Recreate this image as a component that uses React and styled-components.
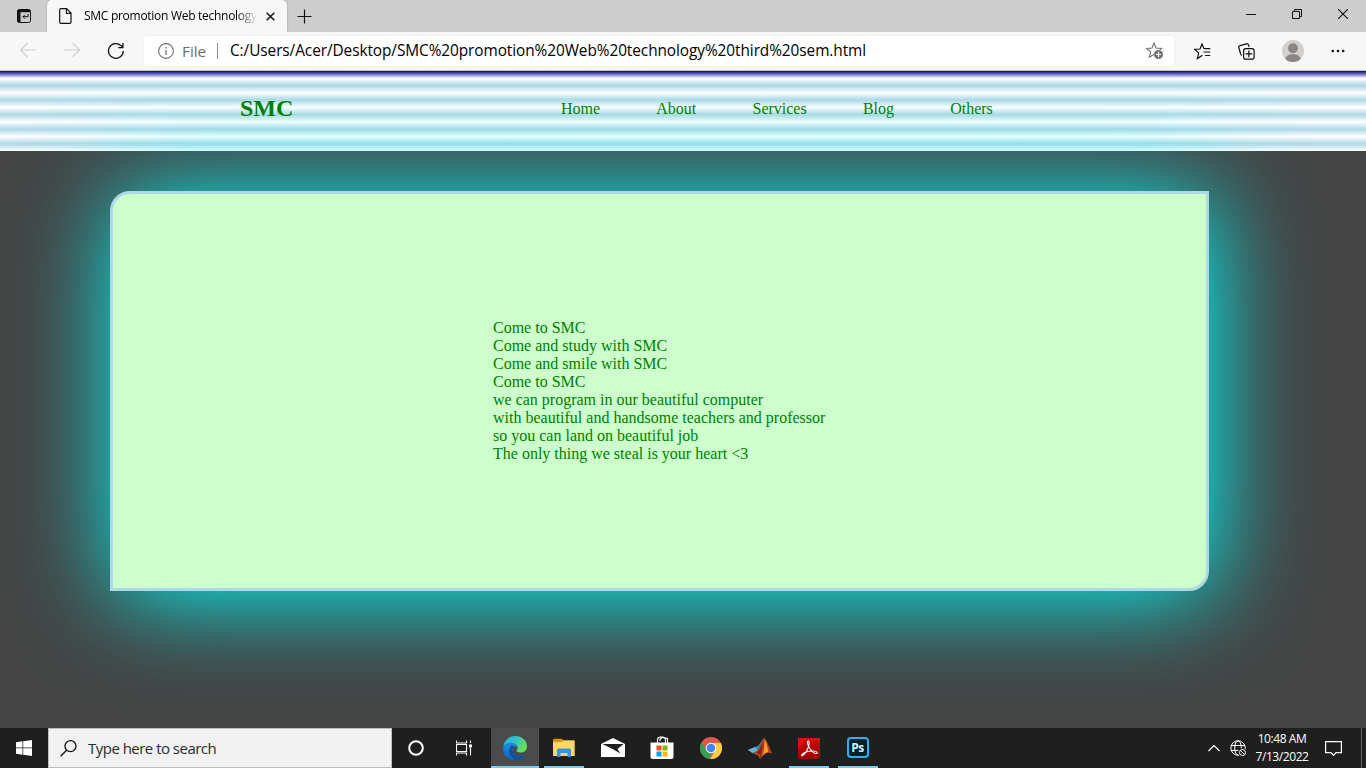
import React from "react";
import styled, { createGlobalStyle, css } from "styled-components";

const GlobalStyle = createGlobalStyle`
  *, *::before, *::after { box-sizing: border-box; }
  html, body { margin: 0; padding: 0; overflow: hidden; }
  svg { display: block; flex: none; }
`;

const ui = `"Open Sans", "Noto Sans", sans-serif`;

const Screen = styled.div`
  width: 1366px;
  height: 768px;
  display: flex;
  flex-direction: column;
  overflow: hidden;
  background: #444;
`;

const TabStrip = styled.div`
  flex: none;
  height: 32px;
  display: flex;
  background: #cdcdcd;
`;

const StripButton = styled.div`
  width: ${(p) => p.$w}px;
  height: 32px;
  display: flex;
  align-items: center;
  justify-content: center;
`;

const Tab = styled.div`
  width: 240px;
  height: 32px;
  padding: 0 10px 0 12px;
  display: flex;
  align-items: center;
  background: #f7f7f7;
  border-radius: 5px 5px 0 0;
  box-shadow: 0 0 2px rgba(0, 0, 0, 0.3);
`;

const TabTitle = styled.div`
  width: 173px;
  margin: 0 9px 0 12px;
  overflow: hidden;
  white-space: nowrap;
  font: 12px/18px ${ui};
  letter-spacing: -0.28px;
  color: #000;
  mask-image: linear-gradient(90deg, #000 152px, transparent 174px);
`;

const WindowControls = styled.div`
  margin-left: auto;
  display: flex;
  padding-bottom: 3px;
  margin-top: -2px;
`;

const Toolbar = styled.div`
  flex: none;
  position: relative;
  z-index: 1;
  height: 39px;
  display: flex;
  align-items: center;
  background: #f7f7f7;
  border-bottom: 1px solid #c6c6c6;
`;

const NavButtons = styled.div`
  width: 144px;
  padding-left: 19px;
  display: flex;
  gap: 26px;
`;

const AddressBar = styled.div`
  width: 1030px;
  height: 30px;
  padding: 0 10px 0 13px;
  display: flex;
  align-items: center;
  background: #fff;
  border-radius: 4px;
  box-shadow: 0 0 3px rgba(0, 0, 0, 0.06);
`;

const Scheme = styled.span`
  width: 28px;
  margin-left: 7px;
  font: 15.300px/24px ${ui};
  color: #6d6d6d;
`;

const Divider = styled.span`
  width: 1px;
  height: 16px;
  margin: 0 12px 0 7px;
  background: #8c8c8c;
`;

const Url = styled.span`
  flex: 1;
  white-space: nowrap;
  font: 15.400px/24px ${ui};
  letter-spacing: -0.075px;
  color: #000;
`;

const ToolbarActions = styled.div`
  flex: 1;
  padding: 0 21px 0 20px;
  display: flex;
  align-items: center;
  justify-content: space-between;
`;

const Page = styled.main`
  flex: 1;
  min-height: 0;
  overflow: hidden;
  background: #444;
  font-family: "Liberation Serif", serif;
  color: green;
`;

const Header = styled.header`
  height: 80px;
  display: flex;
  align-items: center;
  padding: 0 0 5px 240px;
  background: linear-gradient(
    darkblue, white, lightblue, white, lightblue, white,
    lightblue, white, lightblue, white, lightblue, white
  );
`;

const Brand = styled.h1`
  width: 321px;
  margin: 0;
  padding-bottom: 2px;
  font-size: 24px;
  line-height: 28px;
`;

const Menu = styled.nav`
  display: flex;
  gap: 56.200px;
  font-size: 16px;
  line-height: 18px;
`;

const MenuLink = styled.a`
  color: green;
`;

const Card = styled.section`
  width: 1099px;
  height: 400px;
  margin: 40px 0 0 110px;
  display: flex;
  align-items: center;
  justify-content: center;
  border: 3px solid lightblue;
  border-radius: 20px 0;
  background: #ccffcc;
  box-shadow: 5px 5px 100px aqua;
`;

const Verse = styled.p`
  width: 333px;
  margin: 0;
  font-size: 16px;
  line-height: 18px;
  white-space: pre;
`;

const Taskbar = styled.footer`
  flex: none;
  position: relative;
  z-index: 1;
  height: 40px;
  display: flex;
  background: #1f1f1f;
`;

const SearchBox = styled.div`
  width: 344px;
  height: 40px;
  padding-left: 11px;
  display: flex;
  align-items: center;
  gap: 11px;
  background: #f1f1f1;
  border: 1px solid #bdbdbd;
  font: 15px/20px ${ui};
  letter-spacing: -0.52px;
  color: #2c2c2c;
`;

const TaskButton = styled.div`
  width: ${(p) => p.$w || 49}px;
  height: 40px;
  display: flex;
  align-items: center;
  justify-content: center;
  ${(p) => p.$active && css`background: #4b4b4b;`}
  ${(p) => p.$open && css`box-shadow: inset 0 -2px #76cdee;`}
`;

const TaskApps = styled.div`
  display: flex;
  margin-left: 2px;
`;

const AppSlot = styled.div`
  width: 49px;
  display: flex;
  justify-content: center;
`;

const Tray = styled.div`
  margin-left: auto;
  display: flex;
  align-items: center;
`;

const Globe = styled.div`
  margin-left: 10px;
`;

const Clock = styled.div`
  width: 66px;
  margin-left: 2px;
  text-align: center;
  white-space: nowrap;
  font: 12px/18px ${ui};
  letter-spacing: -0.42px;
  color: #fff;
`;

const ActionCenter = styled.div`
  width: 46px;
  padding-left: 10px;
`;

const ShowDesktop = styled.div`
  width: 5px;
  height: 40px;
  border-left: 1px solid #666;
`;

const Line = ({ w = 16, h = 16, c = "#111", s = 1.1, children, box }) => (
  <svg width={w} height={h} viewBox={box || `0 0 ${w} ${h}`} fill="none" stroke={c} strokeWidth={s}>
    {children}
  </svg>
);

const TabActionsIcon = () => (
  <Line w={14} h={14} s={1}>
    <rect x=".5" y=".5" width="13" height="13" rx="1.8" />
    <path d="M1 2h12" strokeWidth="2.400" />
    <path d="M2 1v12" strokeWidth="3" />
    <path d="M11 5v2.700H6M8 5.700 6 7.700 8 9.700" />
  </Line>
);

const PageIcon = () => (
  <Line w={13} h={16} s={1.2}>
    <path d="M2 .7h5.600l4.400 4.400V14q0 1.300-1.300 1.300H2Q.7 15.300.7 14V2Q.7.7 2 .7ZM7.400.8V5.300H12" />
  </Line>
);

const ArrowIcon = ({ flip }) => (
  <Line w={18} h={16} c="#cfcfcf">
    <g transform={flip ? "matrix(-1 0 0 1 18 0)" : undefined}>
      <path d="M17 8H1.500M8.500 1 1.500 8l7 7" />
    </g>
  </Line>
);

const ReloadIcon = () => (
  <Line w={18} h={18} s={1.3}>
    <path d="M16.300 9A7.400 7.400 0 1 1 13.800 3.400L15.800 5.300M15.900 1v4.600h-4.600" />
  </Line>
);

const InfoIcon = () => (
  <Line w={18} h={18} c="#6f6f6f">
    <circle cx="9" cy="9" r="7.400" />
    <path d="M9 8v5M9 5v1.500" strokeWidth="1.300" />
  </Line>
);

const AddFavoriteIcon = () => (
  <Line w={18} h={18} c="#6f6f6f">
    <path d="M7.800 12.500 3.400 15.200l1.300-5.300L.5 6.400 6 6 8 1l2 5 5.500.4-1.500 1.300" />
    <circle cx="12.500" cy="12.500" r="4.500" fill="#6f6f6f" stroke="none" />
    <path d="M12.500 9.800v5.400M9.800 12.500h5.400" stroke="#fff" strokeWidth="1.200" />
  </Line>
);

const FavoritesIcon = () => (
  <Line w={17} h={17} s={1.2}>
    <path d="M8.500 12.300 3.400 15.600l1.300-5.700L.5 6.400 6 6 8 1l2 4.700h6.300M9.500 9h6.800M11 12.500h5.300" />
  </Line>
);

const CollectionsIcon = () => (
  <Line w={17} h={17} s={1.2}>
    <path d="M4 12.500Q2.800 12 2.500 10.500L.8 4.500Q.5 3 2 2.600L8.500.8q1.600-.4 2 1.200l.6 2" />
    <rect x="5.600" y="5.600" width="10.500" height="10.500" rx="2.200" />
    <path d="M10.850 7.500v6.700M7.500 10.850h6.700" />
  </Line>
);

const ProfileIcon = () => (
  <svg width="22" height="22" viewBox="0 0 22 22">
    <defs><clipPath id="avatar"><circle cx="11" cy="11" r="11" /></clipPath></defs>
    <g clipPath="url(#avatar)">
      <rect width="22" height="22" fill="#d2d0ce" />
      <circle cx="11" cy="8.300" r="5" fill="#8a8684" />
      <ellipse cx="11" cy="20" rx="8" ry="6" fill="#8a8684" />
    </g>
  </svg>
);

const MoreIcon = () => (
  <svg width="14" height="4" viewBox="0 0 14 4" fill="#111">
    <circle cx="1.800" cy="2" r="1.300" /><circle cx="7" cy="2" r="1.300" /><circle cx="12.200" cy="2" r="1.300" />
  </svg>
);

const EdgeIcon = () => (
  <svg width="24" height="24" viewBox="0 0 24 24">
    <defs>
      <linearGradient id="edgeTop" x1="0" y1="0" x2="1" y2=".5">
        <stop stopColor="#2aa7e8" /><stop offset=".45" stopColor="#31bfd2" /><stop offset="1" stopColor="#65df55" />
      </linearGradient>
      <linearGradient id="edgeLow" x1="0" y1="0" x2="0" y2="1">
        <stop stopColor="#1b8fdc" /><stop offset="1" stopColor="#0c62bd" />
      </linearGradient>
    </defs>
    <path d="M.3 10.500C1.200 4.200 6.200 0 12.200 0 19 0 24 4.800 24 10.200c0 3.900-3 6.400-6.400 6.400-3.100 0-4.600-1.200-3.700-2.500 1.800-2.700.2-6.500-4.400-6.800C5.300 7.100 1.700 8.600.3 10.500Z" fill="url(#edgeTop)" />
    <path d="M.1 12C.4 8.500 4 6.400 8.600 6.800c3.500.2 6 2.500 6.100 5.100-.8-1.100-2.200-1.700-3.300-1.200-3.300 1.500-2.600 6.500 1.200 8.500 3.200 1.700 6.700 1 9.800-.9-1.300 2.700-5 5.700-10.200 5.700C5.400 24-.3 18.700.1 12Z" fill="url(#edgeLow)" />
    <path d="M8.600 9.200C4.400 13.400 6 21 12.700 23.900c4.400.2 8.200-2.300 9.700-5.600-3 1.900-6.600 2.600-9.800.9-3.800-2-4.500-7-1.200-8.500-.9-.9-1.800-1.500-2.800-1.500Z" fill="#0f519f" />
  </svg>
);

const FolderIcon = () => (
  <svg width="22" height="20" viewBox="0 0 22 20">
    <path d="M0 1.500h9l2 1h10.500V18H0Z" fill="#eba91d" />
    <path d="M0 4.500 9.500 4l1-1.500h11V18H0Z" fill="#ffd668" />
    <path d="M4 19v-7q0-1.500 1.500-1.500h11q1.500 0 1.500 1.500v7h-3.500v-4h-7v4Z" fill="#3494dd" />
    <path d="M0 1.500 1 .7h8l.7 1.300-1 1.400H0Z" fill="#d99200" />
  </svg>
);

const MailIcon = () => (
  <svg width="24" height="20" viewBox="0 0 24 20">
    <path d="M12 0 24 6v13H0V6Z" fill="#fff" />
    <path d="M1.500 6h21l-6 5 3 4.500L12 11.300Z" fill="#1f1f1f" />
  </svg>
);

const StoreIcon = () => (
  <svg width="24" height="24" viewBox="0 0 24 24">
    <path d="M7.500 7V4q0-3 3-3h2q3 0 3 3v3M10 5V3l2-1.500 5.500 1V7" fill="none" stroke="#fff" strokeWidth="1.200" />
    <path d="M.5 6.500h23V21q0 2-2 2h-19q-2 0-2-2Z" fill="#fff" />
    <path d="M6.500 9.500h5v5h-5Z" fill="#f25022" /><path d="M12.500 9.500h5v5h-5Z" fill="#7fba00" />
    <path d="M6.500 15.500h5v5h-5Z" fill="#00a4ef" /><path d="M12.500 15.500h5v5h-5Z" fill="#ffb900" />
  </svg>
);

const ChromeIcon = () => (
  <svg width="22" height="22" viewBox="0 0 22 22">
    <circle cx="11" cy="11" r="11" fill="#e2574c" />
    <path d="M1.500 5.500 6.700 13.500 11 16l-1 6A11 11 0 0 1 1.500 5.500Z" fill="#35a152" />
    <path d="M11 6h9.800A11 11 0 0 1 10 22l5.300-8.500Z" fill="#fbce44" />
    <circle cx="11" cy="11" r="5.300" fill="#fff" />
    <circle cx="11" cy="11" r="4.300" fill="#4285f4" />
  </svg>
);

const MatlabIcon = () => (
  <svg width="24" height="22" viewBox="0 0 24 22">
    <path d="M0 13 7 10q4-1 8-8l-2 9-5 7q-2-2-4-2Z" fill="#347fae" />
    <path d="M0 13 7 10l3 3-5 3Z" fill="#69b6d4" />
    <path d="M5 16q5-1 8-9 2-6 3-6 2 0 8 16-5-4-12 5-2-5-7-6Z" fill="#c4401b" />
    <path d="M16 1q-1 6-2 12l-2 9q1-7-4-6 5-3 8-15Z" fill="#782819" />
    <path d="M16.300 2q2 3 3 8l1 5q-3 0-6 4 3-8 2-17Z" fill="#f5a12b" />
  </svg>
);

const AcrobatIcon = () => (
  <svg width="22" height="21" viewBox="0 0 22 21">
    <defs><linearGradient id="acro" x1="0" y1="0" x2="0" y2="1"><stop stopColor="#c90808" /><stop offset="1" stopColor="#9f0000" /></linearGradient></defs>
    <rect width="22" height="21" fill="url(#acro)" />
    <path d="M0 0h22v3H8L0 10Z" fill="#e11b18" opacity=".6" />
    <path d="M10.500 3c-1.700-.2-1.200 3 .6 6.200 2.300 4 5.500 6.500 7.400 6.300 1.600-.2.800-2.300-3-2.500-4-.2-8.500 1-11 3-1.500 1.200-.9 2.500.5 1.300 2.300-2 5.200-7.300 6-11 .3-1.600.2-3.200-.5-3.300Z" fill="none" stroke="#fff" strokeWidth="1.100" />
  </svg>
);

const PhotoshopTile = styled.div`
  width: 22px;
  height: 21px;
  display: flex;
  align-items: center;
  justify-content: center;
  border: 2px solid #26b4ef;
  border-radius: 4px;
  background: #001d2c;
  color: #d8f2ff;
  font: 700 12px/16px ${ui};
  letter-spacing: -0.6px;
  margin-bottom: 1px;
`;

const apps = [
  { icon: <EdgeIcon />, w: 48, active: true, open: true },
  { icon: <FolderIcon />, w: 40, open: true },
  { icon: <MailIcon />, w: 40 },
  { icon: <StoreIcon />, w: 40 },
  { icon: <ChromeIcon />, w: 40 },
  { icon: <MatlabIcon />, w: 40 },
  { icon: <AcrobatIcon />, w: 40, open: true },
  { icon: <PhotoshopTile>Ps</PhotoshopTile>, w: 40, open: true },
];

const verse = [
  "Come to SMC",
  "Come and study with SMC",
  "Come and smile with SMC",
  "Come to SMC",
  "we can program in our beautiful computer",
  "with beautiful and handsome teachers and professor",
  "so you can land on beautiful job",
  "The only thing we steal is your heart <3",
].join("\n");

export default function App() {
  return (
    <Screen>
      <GlobalStyle />
      <TabStrip>
        <StripButton $w={47}><TabActionsIcon /></StripButton>
        <Tab>
          <PageIcon />
          <TabTitle>SMC promotion Web technology</TabTitle>
          <Line w={9} h={9} s={1.5}><path d="m.7.7 7.600 7.600M8.300.7.700 8.300" /></Line>
        </Tab>
        <StripButton $w={35}><Line w={15} h={15} s={1.2}><path d="M7.500.5v14M.5 7.500h14" /></Line></StripButton>
        <WindowControls>
          <StripButton $w={46}><Line w={10} h={10} s={1}><path d="M0 5.500h10" /></Line></StripButton>
          <StripButton $w={46}><Line w={10} h={10} s={1}><path d="M.5 2.500h7v7h-7ZM2.500 2.500v-2h7v7h-2" /></Line></StripButton>
          <StripButton $w={46}><Line w={10} h={10} s={1.1}><path d="m0 0 10 10M10 0 0 10" /></Line></StripButton>
        </WindowControls>
      </TabStrip>

      <Toolbar>
        <NavButtons>
          <ArrowIcon />
          <ArrowIcon flip />
          <ReloadIcon />
        </NavButtons>
        <AddressBar>
          <InfoIcon />
          <Scheme>File</Scheme>
          <Divider />
          <Url>C:/Users/Acer/Desktop/SMC%20promotion%20Web%20technology%20third%20sem.html</Url>
          <AddFavoriteIcon />
        </AddressBar>
        <ToolbarActions>
          <FavoritesIcon />
          <CollectionsIcon />
          <ProfileIcon />
          <MoreIcon />
        </ToolbarActions>
      </Toolbar>

      <Page>
        <Header>
          <Brand>SMC</Brand>
          <Menu>
            {["Home", "About", "Services", "Blog", "Others"].map((t) => <MenuLink key={t}>{t}</MenuLink>)}
          </Menu>
        </Header>
        <Card><Verse>{verse}</Verse></Card>
      </Page>

      <Taskbar>
        <TaskButton $w={48}>
          <svg width="16" height="16" viewBox="0 0 16 16" fill="#fff">
            <path d="M0 2.300 6.500 1.300v6.300H0ZM7.200 1.200 16 0v7.600H7.200ZM0 8.300h6.500v6.400L0 13.800ZM7.200 8.300H16V16l-8.800-1.200Z" />
          </svg>
        </TaskButton>
        <SearchBox>
          <Line w={17} h={17} s={1.3}><circle cx="10.500" cy="6.200" r="5.500" /><path d="M6.600 10.200.6 16.200" /></Line>
          Type here to search
        </SearchBox>
        <TaskButton $w={48}><Line w={16} h={16} c="#fff" s={2}><circle cx="8" cy="8" r="6.800" /></Line></TaskButton>
        <TaskButton $w={48}>
          <Line w={17} h={16} c="#fff" s={1.1}>
            <path d="M.5.500v2.500h10V.500M.5 4.500h10v7H.5ZM.5 15.500V13h10v2.500M14.500.500v2.500M14.500 8v7.500" />
            <path d="M13 4.500h3v3h-3Z" fill="#fff" stroke="none" />
          </Line>
        </TaskButton>
        <TaskApps>
          {apps.map((a, i) => (
            <AppSlot key={i}>
              <TaskButton $w={a.w} $active={a.active} $open={a.open}>{a.icon}</TaskButton>
            </AppSlot>
          ))}
        </TaskApps>
        <Tray>
          <Line w={12} h={8} c="#fff" s={1.2}><path d="m.5 7 5.500-5.500L11.500 7" /></Line>
          <Globe>
            <Line w={17} h={17} c="#fff" s={1}>
              <circle cx="8" cy="8" r="7.200" />
              <ellipse cx="8" cy="8" rx="3.300" ry="7.200" />
              <path d="M1 5.500h14M1 10.500h14" />
              <circle cx="12.300" cy="12.300" r="4.400" fill="#1f1f1f" stroke="none" />
              <circle cx="12.500" cy="12.500" r="3" /><path d="m10.400 10.400 4.200 4.200" />
            </Line>
          </Globe>
          <Clock>10:48 AM<br />7/13/2022</Clock>
          <ActionCenter>
            <Line w={17} h={17} c="#fff" s={1.2}><path d="M.6 1.600h15.800v11H11l-2.500 2.800L6 12.600H.6Z" /></Line>
          </ActionCenter>
          <ShowDesktop />
        </Tray>
      </Taskbar>
    </Screen>
  );
}
